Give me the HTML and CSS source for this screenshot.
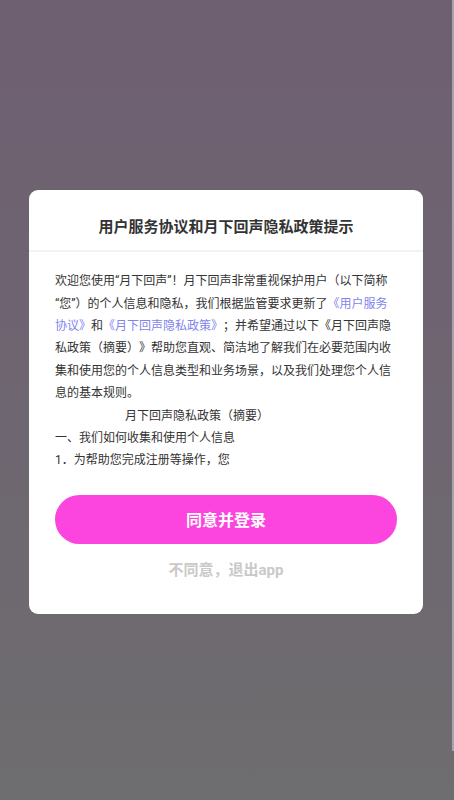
FILE: index.html
```html
<!DOCTYPE html>
<html lang="zh-CN">
<head>
    <meta charset="UTF-8">
    <title>用户服务协议和隐私政策提示</title>
    <link rel="stylesheet" href="styles.css">
</head>
<body>

<div id="mask">
    <!--The popup card that asks for agreement-->
    <div class="dialog">
        <div class="dialogHead">
            <h3 class="dialogTitle">用户服务协议和月下回声隐私政策提示</h3>
        </div>

        <div class="dialogBody">
            <p>欢迎您使用“月下回声”！月下回声非常重视保护用户（以下简称“您”）的个人信息和隐私，我们根据监管要求更新了<span class="link">《用户服务</span><span class="link">协议》</span>和<span class="link">《月下回声隐私政策》</span>；并希望通过以下《月下回声隐私政策（摘要）》帮助您直观、简洁地了解我们在必要范围内收集和使用您的个人信息类型和业务场景，以及我们处理您个人信息的基本规则。</p>
            <p class="subTitle">月下回声隐私政策（摘要）</p>
            <p>一、我们如何收集和使用个人信息</p>
            <p>1．为帮助您完成注册等操作，您</p>
        </div>

        <button class="agreeBtn" type="button">同意并登录</button>
        <div class="refuse">不同意，退出app</div>
    </div>

    <!--thin scroll indicator on the right side-->
    <div class="scrollBar"></div>
</div>

</body>
</html>
```

FILE: styles.css
```css
/*CSS for whole page*/
html, body {
    margin: 0;
    padding: 0;
}

body {
    font-family: Roboto, "Noto Sans CJK SC", sans-serif;
}

/*dark layer behind the popup*/
#mask {
    position: relative;
    min-height: 800px;
    display: flex;
    align-items: center;
    justify-content: center;
    padding-top: 4px;
    box-sizing: border-box;
    background: linear-gradient(180deg, #6e5f71 0%, #6e6571 45%, #6e6d6f 100%);
}

/*CSS for the popup card*/
.dialog {
    width: 394px;
    margin-right: 2px;
    background-color: #ffffff;
    border-radius: 9px;
    padding-bottom: 34px;
}

.dialogHead {
    padding: 26px 0 12px 0;
    border-bottom: 2px solid #f2f2f2;
}

.dialogTitle {
    margin: 0;
    text-align: center;
    font-size: 15px;
    line-height: 22px;
    font-weight: bold;
    color: #333333;
}

/*CSS for the text of the agreement*/
.dialogBody {
    padding: 18px 26px 0 26px;
    font-size: 12px;
    line-height: 22.4px;
    color: #333333;
    text-spacing-trim: space-all;
}

.dialogBody p {
    margin: 0;
}

.link {
    color: #7f84ee;
}

.subTitle {
    padding-left: 70px;
}

/*CSS for the buttons*/
.agreeBtn {
    display: block;
    width: 342px;
    height: 49px;
    margin: 23px auto 0 auto;
    border: none;
    border-radius: 25px;
    background-color: #fb45de;
    color: #ffffff;
    font-family: Roboto, "Noto Sans CJK SC", sans-serif;
    font-size: 16px;
    font-weight: bold;
}

.refuse {
    margin-top: 16px;
    text-align: center;
    font-size: 15px;
    line-height: 20px;
    font-weight: bold;
    color: #c9c9c9;
}

.scrollBar {
    position: absolute;
    top: 0;
    right: 0;
    width: 2px;
    height: 751px;
    background-color: #a9a1ad;
}
```
